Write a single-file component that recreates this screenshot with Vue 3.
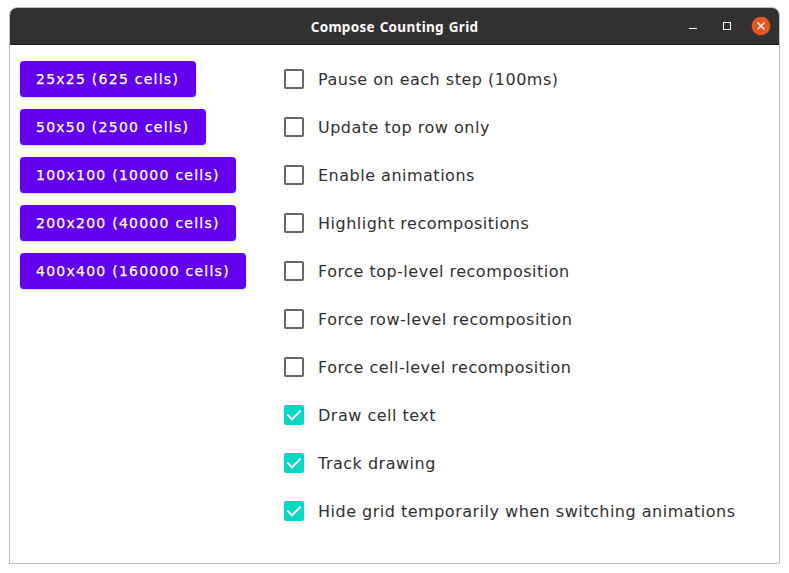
<script setup>
import { ref } from 'vue'

const sizes = ref([
  '25x25 (625 cells)',
  '50x50 (2500 cells)',
  '100x100 (10000 cells)',
  '200x200 (40000 cells)',
  '400x400 (160000 cells)',
])

const options = ref([
  { label: 'Pause on each step (100ms)', checked: false },
  { label: 'Update top row only', checked: false },
  { label: 'Enable animations', checked: false },
  { label: 'Highlight recompositions', checked: false },
  { label: 'Force top-level recomposition', checked: false },
  { label: 'Force row-level recomposition', checked: false },
  { label: 'Force cell-level recomposition', checked: false },
  { label: 'Draw cell text', checked: true },
  { label: 'Track drawing', checked: true },
  { label: 'Hide grid temporarily when switching animations', checked: true },
])
</script>

<template>
  <div class="desktop">
    <div class="window">
      <header class="titlebar">
        <span class="title">Compose Counting Grid</span>
        <svg class="controls" width="96" height="36" viewBox="0 0 96 36">
          <rect x="6" y="20" width="8" height="1" fill="#fff" />
          <rect x="40.5" y="14.5" width="7" height="7" fill="none" stroke="#fff" />
          <circle cx="78" cy="18" r="9.3" fill="#e95420" />
          <path d="M74.5 14.5L81.5 21.5M81.5 14.5L74.5 21.5" stroke="#fff" stroke-width="1.4" />
        </svg>
      </header>
      <main class="content">
        <div class="sizes">
          <button v-for="s in sizes" :key="s" class="size">{{ s }}</button>
        </div>
        <div class="options">
          <div v-for="o in options" :key="o.label" class="option" @click="o.checked = !o.checked">
            <span class="box" :class="{ checked: o.checked }">
              <svg v-if="o.checked" width="20" height="20" viewBox="0 0 20 20">
                <path d="M3.3 9.6L8 14.3L16.7 5.6" fill="none" stroke="#fff" stroke-width="2" />
              </svg>
            </span>
            <span class="label">{{ o.label }}</span>
          </div>
        </div>
      </main>
    </div>
  </div>
</template>

<style>
body {
  background: #fff;
}
</style>

<style scoped>
.desktop {
  box-sizing: border-box;
  width: 789px;
  height: 573px;
  padding: 7px 9px 9px;
}
.window {
  box-sizing: border-box;
  width: 771px;
  height: 557px;
  border: 1px solid #c0c0c0;
  border-radius: 8px 8px 0 0;
  overflow: hidden;
  background: #fff;
}
.titlebar {
  display: grid;
  grid-template-columns: 96px 1fr 96px;
  height: 36px;
  background: #333031;
  border-bottom: 1px solid #1d1b1c;
}
.title {
  grid-column: 2;
  text-align: center;
  color: #fff;
  font: bold 13.5px/38px "Noto Sans", sans-serif;
  letter-spacing: 0.3px;
  word-spacing: 1px;
  white-space: nowrap;
}
.controls {
  display: block;
}
.content {
  display: flex;
  padding: 10px;
}
.sizes {
  display: flex;
  flex-direction: column;
  align-items: flex-start;
  gap: 12px;
  width: 254px;
  padding-top: 6px;
}
.size {
  height: 36px;
  padding: 0 16.6px 0 16px;
  border: 0;
  border-radius: 4px;
  background: #6200ee;
  color: #fff;
  font: 14px/36px "DejaVu Sans", sans-serif;
  letter-spacing: 1.25px;
  -webkit-text-stroke: 0.25px #fff;
  white-space: nowrap;
  box-shadow: 0 1px 3px rgba(0, 0, 0, 0.22);
}
.option {
  display: flex;
  align-items: center;
  gap: 14px;
  height: 48px;
  margin-left: 10px;
}
.box {
  box-sizing: border-box;
  width: 20px;
  height: 20px;
  border: 2px solid #666;
  border-radius: 2px;
}
.box.checked {
  border: 0;
  background: #03dac6;
}
.box svg {
  display: block;
}
.label {
  padding-top: 2px;
  color: #303030;
  font: 16px/24px "DejaVu Sans", sans-serif;
  letter-spacing: 0.5px;
  white-space: nowrap;
}
</style>
